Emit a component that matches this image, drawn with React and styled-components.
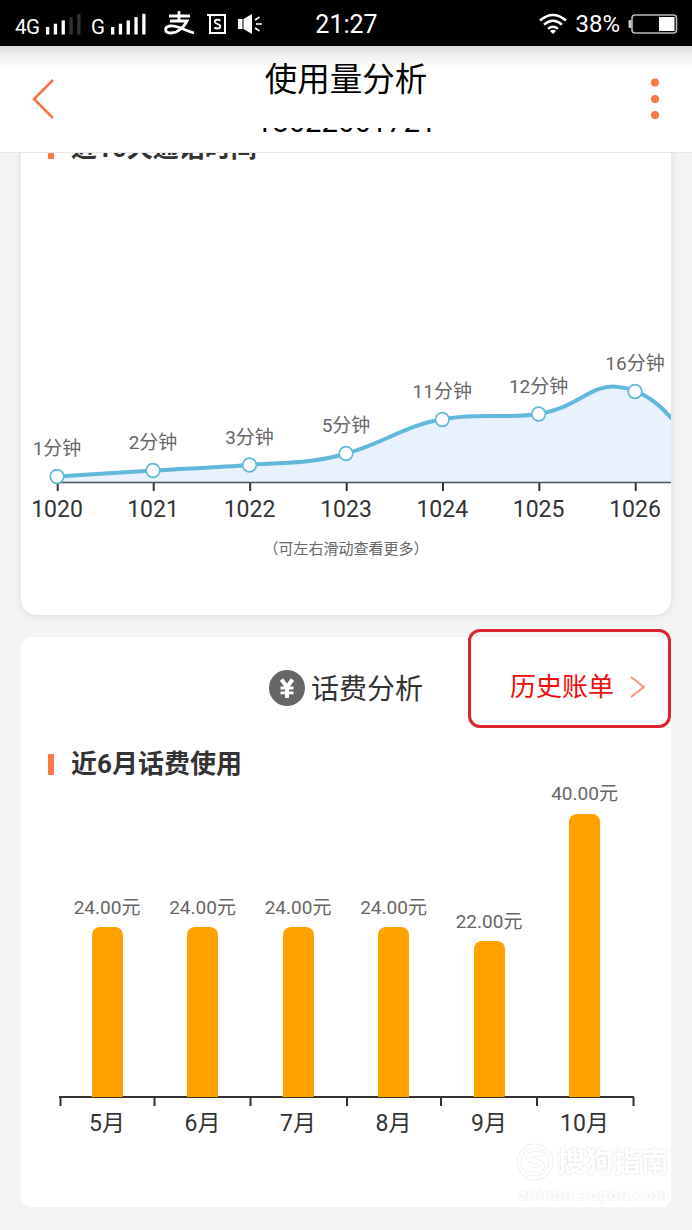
import React from "react";
import styled, { createGlobalStyle } from "styled-components";

const GlobalStyle = createGlobalStyle`
    * { box-sizing: border-box; }
    body {
        margin: 0;
        background: #f4f4f4;
        font-family: Roboto, "Noto Sans CJK SC", sans-serif;
        color: #333;
    }
`

const Screen = styled.div`
    width: 692px;
    height: 1230px;
    display: flex;
    flex-direction: column;
    overflow: hidden;
    background: #f4f4f4;
`

/* ---------- status bar ---------- */
const StatusBar = styled.div`
    height: 46px;
    flex: none;
    display: grid;
    grid-template-columns: 1fr auto 1fr;
    align-items: center;
    padding: 1px 14px 0 15px;
    background: #000;
    color: #fff;
`

const StatusSide = styled.div`
    display: flex;
    align-items: center;
    justify-content: ${(p) => (p.$end ? "flex-end" : "flex-start")};
`

const Network = styled.span`
    font-size: 20.5px;
    line-height: 24px;
    letter-spacing: -0.5px;
    padding-top: 6px;
    width: ${(p) => p.$width}px;
    margin-left: ${(p) => p.$left || 0}px;
`

const Glyph = styled.svg`
    display: block;
    flex: none;
    margin-left: ${(p) => p.$left || 0}px;
`

const Clock = styled.span`
    font-size: 25px;
    line-height: 30px;
    padding-top: 2px;
`

const Percent = styled.span`
    font-size: 24px;
    line-height: 30px;
    margin-left: 8px;
    padding-top: 1px;
`

/* ---------- page header ---------- */
const Header = styled.header`
    height: 107px;
    flex: none;
    display: flex;
    align-items: flex-start;
    justify-content: space-between;
    padding: 0 31px;
    background: linear-gradient(#dcdcdc 0, #f0f0f0 9px, #fff 24px);
    border-bottom: 1px solid #e6e6e6;
`

const HeaderIcon = styled.svg`
    display: block;
    width: 24px;
    height: 44px;
    margin-top: 31px;
`

const TitleBox = styled.div`
    display: flex;
    flex-direction: column;
    align-items: center;
`

const Title = styled.h1`
    margin: 14px 0 0;
    font-size: 32.5px;
    line-height: 40px;
    font-weight: 400;
    color: #000;
`

/* only the lower edge of the number is visible while it slides in */
const PhoneClip = styled.div`
    height: 8px;
    margin-top: 28px;
    overflow: hidden;
    display: flex;
    align-items: flex-end;
    font-size: 29.2px;
    line-height: 28px;
    color: #000;
`

/* ---------- cards ---------- */
const Content = styled.main`
    flex: 1;
    min-height: 0;
    overflow: hidden;
    display: flex;
    flex-direction: column;
    gap: 22px;
    padding: 0 21px;
`

const Card = styled.section`
    position: relative;
    flex: none;
    height: ${(p) => p.$height}px;
    margin-top: ${(p) => p.$scrolled || 0}px;
    background: #fff;
    border-radius: ${(p) => p.$radius}px;
    box-shadow: ${(p) => (p.$raised ? "0 1px 8px rgba(0, 0, 0, 0.1)" : "none")};
`

const Heading = styled.h2`
    display: flex;
    align-items: center;
    gap: 17px;
    margin: ${(p) => p.$top || 0}px 0 0;
    padding-left: 27px;
    font-size: 26px;
    line-height: 36px;
    font-weight: 700;
    color: #333;

    &::before {
        content: "";
        width: 6px;
        height: 21px;
        background: #ff7846;
    }
`

const ChartSvg = styled.svg`
    display: block;
    margin-top: ${(p) => p.$top || 0}px;
    font-family: Roboto, "Noto Sans CJK SC", sans-serif;
    text-anchor: middle;
`

const Hint = styled.p`
    margin: 15px 0 0;
    text-align: center;
    font-size: 15px;
    line-height: 22px;
    color: #666;
`

const CardTop = styled.div`
    display: grid;
    grid-template-columns: 1fr auto 1fr;
    align-items: center;
    height: 102px;
`

const CardTitle = styled.div`
    grid-column: 2;
    display: flex;
    align-items: center;
    gap: 6px;
    font-size: 28px;
    line-height: 40px;
    color: #333;
`

const CardTitleText = styled.span`
    padding-top: 3px;
`

const BillLink = styled.a`
    display: flex;
    align-items: center;
    justify-content: flex-end;
    gap: 16px;
    padding: 0 26px 2px 0;
    font-size: 26px;
    line-height: 36px;
    color: #f40b0b;
`

const Marker = styled.div`
    position: absolute;
    top: -8px;
    right: 0;
    width: 203px;
    height: 99px;
    border: 3px solid #dc2430;
    border-radius: 12px;
`

/* ---------- bar chart ---------- */
const Bars = styled.div`
    display: grid;
    grid-template-columns: repeat(6, 95.5px);
    align-items: end;
    height: 320px;
    margin: -5px 0 0 38.3px;
`

const BarColumn = styled.div`
    display: flex;
    flex-direction: column;
    align-items: center;
    gap: 6.5px;
`

const BarValue = styled.span`
    font-size: 19px;
    line-height: 26px;
    color: #666;
`

const Bar = styled.div`
    width: 31px;
    background: #ffa200;
    border-radius: 8px 8px 0 0;
`

const Months = styled.div`
    display: grid;
    grid-template-columns: repeat(6, 95.5px);
    margin: 2px 0 0 38.3px;
    text-align: center;
    font-size: 23px;
    line-height: 32px;
    color: #333;
`

const Watermark = styled.div`
    position: absolute;
    right: 2px;
    bottom: 1px;
    display: grid;
    grid-template-columns: 40px auto;
    align-items: center;
    color: #fff;
    text-shadow: 0 0 2px #d8d8d8, 0 0 1px #e8e8e8;
`

const WatermarkName = styled.span`
    font-size: 28px;
    line-height: 42px;
    font-weight: 700;
`

const WatermarkUrl = styled.span`
    grid-column: 1 / 3;
    font-family: "DejaVu Sans", sans-serif;
    font-size: 14px;
    line-height: 22px;
    letter-spacing: 0.5px;
    font-weight: 700;
    text-align: right;
    white-space: nowrap;
    text-shadow: 0 0 2px #dadada;
`

const calls = [
    { day: "1020", label: "1分钟", x: 36, y: 323.5 },
    { day: "1021", label: "2分钟", x: 132, y: 317.5 },
    { day: "1022", label: "3分钟", x: 228.5, y: 312 },
    { day: "1023", label: "5分钟", x: 325, y: 300.5 },
    { day: "1024", label: "11分钟", x: 421.3, y: 266.5 },
    { day: "1025", label: "12分钟", x: 517.6, y: 261 },
    { day: "1026", label: "16分钟", x: 614, y: 238.5 },
];

const bills = [
    { month: "5月", amount: 24 },
    { month: "6月", amount: 24 },
    { month: "7月", amount: 24 },
    { month: "8月", amount: 24 },
    { month: "9月", amount: 22 },
    { month: "10月", amount: 40 },
];

const ticks = [39.5, 133.5, 229.5, 326, 420, 516, 612.5];

const curve =
    "M36 323.5 C68 321.5 100 319.5 132 317.5 C164 315.5 196 314.5 228.5 312 " +
    "C261 309.5 293 310.5 325 300.5 C357 292.5 389 270.5 421.3 266.5 " +
    "C453 259.5 486 266 517.6 261 C557 255 570 230 598 234 Q606 234.5 614 238.5 C629 243 640 253 651 266";

const SignalBars = ({ strength }) => (
    <Glyph width="35" height="22">
        {[0, 1, 2, 3, 4].map((i) => (
            <rect
                key={i}
                x={i * 7.8}
                y={14 - i * 3.3}
                width="3.3"
                height={7.5 + i * 3.3}
                fill={i < strength ? "#fff" : "#333"}
            />
        ))}
    </Glyph>
);

const CallChart = () => (
    <ChartSvg $top={-13} width="650" height="370" viewBox="0 0 650 370">
        <path d={`${curve} L651 329 L36 329 Z`} fill="#e7f2fc" />
        <path d="M36 329.5 H650" stroke="#46545c" strokeWidth="1.4" />
        <path d={curve} fill="none" stroke="#60b8dc" strokeWidth="4" />
        {calls.map((c) => (
            <g key={c.day}>
                <path d={`M${c.x + 0.7} 330 v8`} stroke="#333" strokeWidth="2" />
                <circle cx={c.x} cy={c.y} r="6.8" fill="#fff" stroke="#60b8dc" strokeWidth="1.7" />
                <text x={c.x} y={c.y - 21.5} fontSize="19" fill="#666">{c.label}</text>
                <text x={c.x} y="363.5" fontSize="23" fill="#333">{c.day}</text>
            </g>
        ))}
    </ChartSvg>
);

const BillChart = () => (
    <>
        <Bars>
            {bills.map((b) => (
                <BarColumn key={b.month}>
                    <BarValue>{b.amount.toFixed(2)}元</BarValue>
                    <Bar style={{ height: b.amount * 7.08 }} />
                </BarColumn>
            ))}
        </Bars>
        <ChartSvg $top={-1} width="650" height="10" viewBox="0 0 650 10">
            <path d="M38 1 H613" stroke="#333" strokeWidth="2" />
            {ticks.map((t) => (
                <path key={t} d={`M${t} 1 V10`} stroke="#333" strokeWidth="2" />
            ))}
            {/* the bars reach over the upper half of the axis */}
            {bills.map((b, i) => (
                <path key={b.month} d={`M${70.55 + i * 95.5} 0.5 h31`} stroke="#ffa200" />
            ))}
        </ChartSvg>
        <Months>
            {bills.map((b) => (
                <span key={b.month}>{b.month}</span>
            ))}
        </Months>
    </>
);

const App = () => {
    return (
        <Screen>
            <GlobalStyle />
            <StatusBar>
                <StatusSide>
                    <Network $width={31}>4G</Network>
                    <SignalBars strength={3} />
                    <Network $width={20} $left={10}>G</Network>
                    <SignalBars strength={5} />
                    {/* Alipay */}
                    <Glyph $left={18} width="32" height="26" fill="none" stroke="#fff" strokeWidth="2.8">
                        <path d="M5 5 H26 M15 0 V10 M6 10 H23 C20 16 14 22 7 22 C0 22 0 16 6 15 C13 14 20 19 30 22" />
                    </Glyph>
                    {/* Sogou input */}
                    <Glyph $left={11} width="20" height="22" fill="none" stroke="#fff" strokeWidth="2">
                        <path d="M0 2 H18 V20 H3 V2" />
                        <path d="M13.5 7.5 C11 6 7.5 6.5 7.8 9 C8 11.5 13.3 10.5 13.3 13.2 C13.3 16 9 16 7.3 14.5" strokeWidth="1.8" />
                    </Glyph>
                    {/* Speaker */}
                    <Glyph $left={11} width="26" height="22">
                        <path d="M0 6 H4.5 V16 H0 Z M5.5 6 L14 1 V21 L5.5 16 Z" fill="#fff" />
                        <path d="M17 7 L21.5 4 M18 11 H24 M17 15 L21.5 18" stroke="#fff" strokeWidth="1.6" />
                    </Glyph>
                </StatusSide>
                <Clock>21:27</Clock>
                <StatusSide $end>
                    <Glyph width="28" height="22" fill="none" stroke="#fff" strokeWidth="2.4">
                        <path d="M1 7.5 Q14 -3.5 27 7.5 M5 11.7 Q14 4 23 11.7 M9 15.8 Q14 11.5 19 15.8" />
                        <path d="M11 18 Q14 15.5 17 18 L14 21 Z" fill="#fff" stroke="none" />
                    </Glyph>
                    <Percent>38%</Percent>
                    <Glyph $left={8} width="50" height="20">
                        <rect x="0.5" y="6" width="3" height="8" rx="1" fill="#ccc" />
                        <rect x="4" y="1" width="44.5" height="18" rx="3" fill="#000" stroke="#bbb" strokeWidth="1.6" />
                        <rect x="31" y="3" width="15.5" height="14" fill="#fff" />
                    </Glyph>
                </StatusSide>
            </StatusBar>

            <Header>
                <HeaderIcon viewBox="0 0 24 44" fill="none" stroke="#fa7348" strokeWidth="2.6">
                    <path d="M22 3 L3 22 L22 41" />
                </HeaderIcon>
                <TitleBox>
                    <Title>使用量分析</Title>
                    <PhoneClip>18622661721</PhoneClip>
                </TitleBox>
                <HeaderIcon viewBox="0 0 24 44" fill="#f87846">
                    <circle cx="18" cy="5.5" r="4" />
                    <circle cx="18" cy="22" r="4" />
                    <circle cx="18" cy="38" r="4" />
                </HeaderIcon>
            </Header>

            <Content>
                <Card $height={485} $scrolled={-23} $radius={16} $raised>
                    <Heading>近10天通话时间</Heading>
                    <CallChart />
                    <Hint>（可左右滑动查看更多）</Hint>
                </Card>

                <Card $height={570} $radius={10}>
                    <CardTop>
                        <CardTitle>
                            <svg width="36" height="36" viewBox="0 0 36 36">
                                <circle cx="18" cy="18" r="18" fill="#666" />
                                <path
                                    d="M12.5 9.5 L18 17 L23.5 9.5 M18 16 V28"
                                    fill="none" stroke="#fff" strokeWidth="4"
                                />
                                <path d="M11.5 18 H24.5 M11.5 22.8 H24.5" stroke="#fff" strokeWidth="2.8" />
                            </svg>
                            <CardTitleText>话费分析</CardTitleText>
                        </CardTitle>
                        <BillLink>
                            历史账单
                            <svg width="15" height="22" fill="none" stroke="#f88a70" strokeWidth="1.6">
                                <path d="M1 1 L14 11 L1 21" />
                            </svg>
                        </BillLink>
                    </CardTop>
                    <Heading $top={7}>近6月话费使用</Heading>
                    <BillChart />
                    <Marker />
                    <Watermark>
                        <svg width="40" height="40" viewBox="0 0 40 40" fill="none">
                            <circle cx="18" cy="19" r="16" stroke="#f0f0f0" strokeWidth="5" />
                            <circle cx="18" cy="19" r="16" stroke="#fff" strokeWidth="3" />
                            <path d="M26 13 C21 9 11 10 12 15 C13 19 25 18 25 23 C25 28 14 28 10 24" stroke="#f0f0f0" strokeWidth="6" />
                            <path d="M26 13 C21 9 11 10 12 15 C13 19 25 18 25 23 C25 28 14 28 10 24" stroke="#fff" strokeWidth="4" />
                        </svg>
                        <WatermarkName>搜狗指南</WatermarkName>
                        <WatermarkUrl>zhinan.sogou.com</WatermarkUrl>
                    </Watermark>
                </Card>
            </Content>
        </Screen>
    );
};

export default App;
